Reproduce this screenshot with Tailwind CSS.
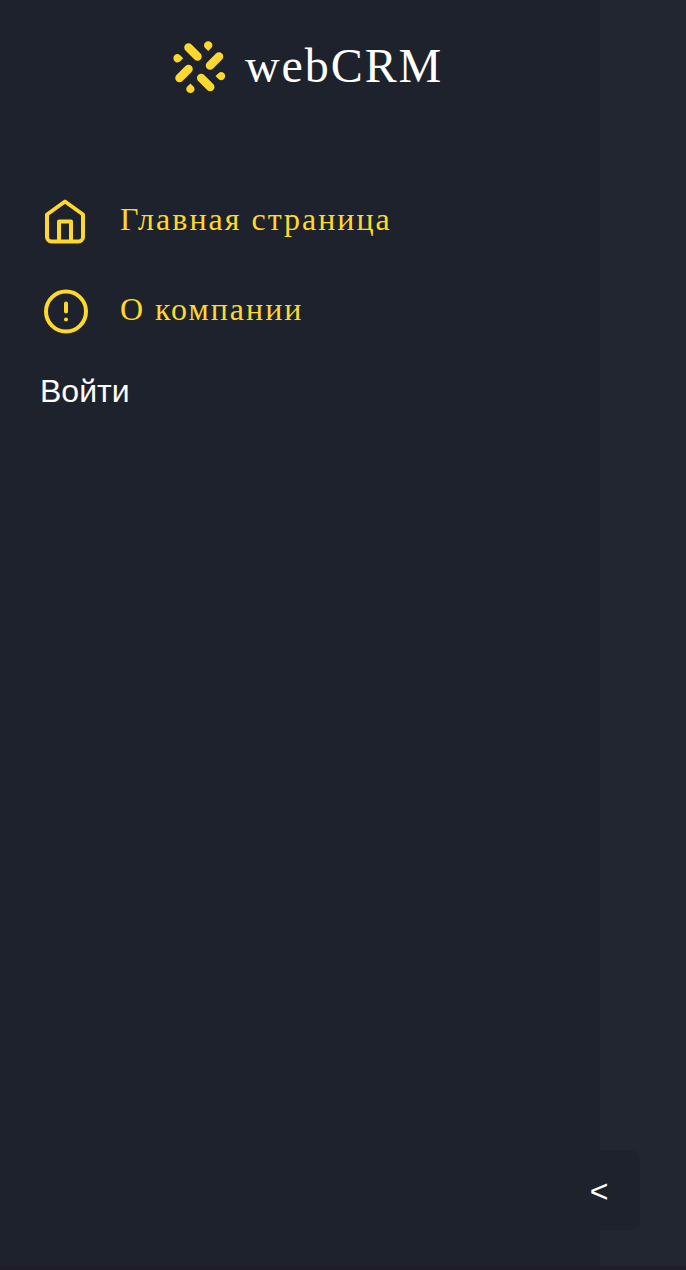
<!DOCTYPE html>
<html lang="ru">
<head>
<meta charset="utf-8">
<title>webCRM</title>
<script src="https://cdn.jsdelivr.net/npm/@tailwindcss/browser@4"></script>
</head>
<body class="h-[1270px] w-[686px] overflow-hidden bg-[#222630]">
<div class="relative flex h-full flex-col">
<aside class="flex w-[600px] flex-1 flex-col bg-[#1e222d]">
<header class="flex h-[180px] items-start pt-9 pl-[169px]">
<svg class="mt-[1px] size-[60px]" viewBox="169 37 60 60" fill="none" stroke="#ffd82e" stroke-width="8.500" stroke-linecap="round">
<path d="M188.500 47.500l9 9M210 65.500l9-9M179.500 78l9-9M201.200 78l9 9"/>
<g fill="#ffd82e" stroke="none">
<path id="drop" d="M208.200 41.300a4.200 4.200 0 0 1 4.200 4.200c0 2.200-2.300 3.400-4.200 5.500c-1.900-2.100-4.200-3.300-4.200-5.500a4.200 4.200 0 0 1 4.200-4.200z"/>
<use href="#drop" transform="rotate(90 199.300 67.200)"/>
<use href="#drop" transform="rotate(180 199.300 67.200)"/>
<use href="#drop" transform="rotate(270 199.300 67.200)"/>
</g>
</svg>
<span class="ml-4 font-['Liberation_Serif',serif] text-[48px] leading-[60px] tracking-[1.920px] text-white">webCRM</span>
</header>
<nav class="flex flex-col px-10 font-['Liberation_Serif',serif] text-[32px] tracking-[2px] text-[#ffd82e]">
<a class="flex h-[90px] items-start"><svg class="mt-4 size-[50px]" viewBox="40 196 50 50" fill="none" stroke="#ffd82e" stroke-width="4" stroke-linejoin="round"><path d="M65 201.500L47 214.500V237a4.500 4.500 0 0 0 4.500 4.500h27A4.500 4.500 0 0 0 83 237V214.500zM59 241.500V221.500H71V241.500"/></svg><span class="ml-[30px] leading-[78px]">Главная страница</span></a>
<a class="flex h-[90px] items-start"><svg class="mt-4 size-[50px]" viewBox="40 286 50 50" fill="none" stroke="#ffd82e" stroke-width="4" stroke-linecap="round"><circle cx="66" cy="311.500" r="20"/><path d="M66 303.500v8M66 319.500v.01"/></svg><span class="ml-[30px] leading-[78px]">О компании</span></a>
</nav>
<button class="ml-10 w-fit font-['Liberation_Sans',sans-serif] text-[32px] leading-[62px] text-white">Войти</button>
</aside>
<footer class="h-1 bg-[#1f1e2a]"></footer>
<button class="absolute top-[1150px] left-[560px] h-20 w-20 rounded-[10px] bg-[#1e222d] pt-0.5 pr-0.5 font-['Liberation_Sans',sans-serif] text-[32px] text-white">&lt;</button>
</div>
</body>
</html>
